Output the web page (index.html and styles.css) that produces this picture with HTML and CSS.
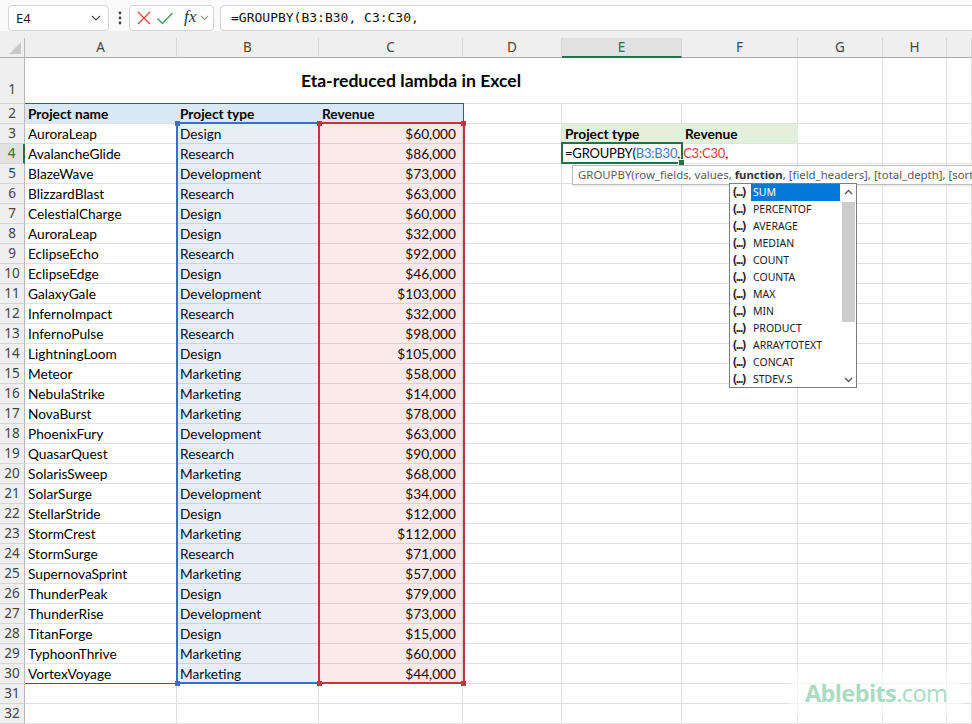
FILE: index.html
```html
<!DOCTYPE html>
<html>
<head>
<meta charset="utf-8">
<link rel="stylesheet" href="styles.css">
</head>
<body>
<div class="toolbar">
  <div class="namebox"><span>E4</span><svg class="chev" width="10" height="6" viewBox="0 0 10 6"><path d="M1 1 L5 5 L9 1" fill="none" stroke="#444" stroke-width="1.2"/></svg></div>
  <svg class="dots" width="4" height="16" viewBox="0 0 4 16"><circle cx="2" cy="3" r="1.4" fill="#444"/><circle cx="2" cy="8" r="1.4" fill="#444"/><circle cx="2" cy="13" r="1.4" fill="#444"/></svg>
  <div class="fxbox">
    <svg width="16" height="16" viewBox="0 0 16 16"><path d="M2 2 L14 14 M14 2 L2 14" stroke="#e0463a" stroke-width="1.4" fill="none"/></svg>
    <svg width="18" height="16" viewBox="0 0 18 16"><path d="M1.5 8.5 L6.5 13.5 L16.5 3" stroke="#3aa05a" stroke-width="1.4" fill="none"/></svg>
    <span class="fx">fx</span>
    <svg width="9" height="6" viewBox="0 0 9 6"><path d="M1 1 L4.5 4.5 L8 1" fill="none" stroke="#999" stroke-width="1.1"/></svg>
  </div>
  <div class="formula">=GROUPBY(B3:B30, C3:C30,</div>
</div>
<div class="sheet">
  <div class="row colhdr"><div class="corner"><span class="tri"></span></div><div>A</div><div>B</div><div>C</div><div>D</div><div class="on">E</div><div>F</div><div>G</div><div>H</div><div></div></div>
  <div class="row r1"><div class="rh">1</div><div class="title">Eta-reduced lambda in Excel</div><i></i><i></i><i></i></div>
  <div class="row"><div class="rh">2</div><div class="c hd">Project name</div><div class="c hd">Project type</div><div class="c hd">Revenue</div><i></i><i></i><i></i><i></i><i></i><i></i></div>
  <div class="row"><div class="rh">3</div><div class="c">AuroraLeap</div><div class="c">Design</div><div class="c num">$60,000</div><i></i><div class="c gh">Project type</div><div class="c gh">Revenue</div><i></i><i></i><i></i></div>
  <div class="row"><div class="rh on">4</div><div class="c">AvalancheGlide</div><div class="c">Research</div><div class="c num">$86,000</div><i></i><div class="c edit">=GROUPBY(<span class="ref-b">B3:B30</span>, <span class="ref-c">C3:C30</span>,</div><i class="nol"></i><i></i><i></i><i></i></div>
  <div class="row"><div class="rh">5</div><div class="c">BlazeWave</div><div class="c">Development</div><div class="c num">$73,000</div><i></i><i></i><i></i><i></i><i></i><i></i></div>
  <div class="row"><div class="rh">6</div><div class="c">BlizzardBlast</div><div class="c">Research</div><div class="c num">$63,000</div><i></i><i></i><i></i><i></i><i></i><i></i></div>
  <div class="row"><div class="rh">7</div><div class="c">CelestialCharge</div><div class="c">Design</div><div class="c num">$60,000</div><i></i><i></i><i></i><i></i><i></i><i></i></div>
  <div class="row"><div class="rh">8</div><div class="c">AuroraLeap</div><div class="c">Design</div><div class="c num">$32,000</div><i></i><i></i><i></i><i></i><i></i><i></i></div>
  <div class="row"><div class="rh">9</div><div class="c">EclipseEcho</div><div class="c">Research</div><div class="c num">$92,000</div><i></i><i></i><i></i><i></i><i></i><i></i></div>
  <div class="row"><div class="rh">10</div><div class="c">EclipseEdge</div><div class="c">Design</div><div class="c num">$46,000</div><i></i><i></i><i></i><i></i><i></i><i></i></div>
  <div class="row"><div class="rh">11</div><div class="c">GalaxyGale</div><div class="c">Development</div><div class="c num">$103,000</div><i></i><i></i><i></i><i></i><i></i><i></i></div>
  <div class="row"><div class="rh">12</div><div class="c">InfernoImpact</div><div class="c">Research</div><div class="c num">$32,000</div><i></i><i></i><i></i><i></i><i></i><i></i></div>
  <div class="row"><div class="rh">13</div><div class="c">InfernoPulse</div><div class="c">Research</div><div class="c num">$98,000</div><i></i><i></i><i></i><i></i><i></i><i></i></div>
  <div class="row"><div class="rh">14</div><div class="c">LightningLoom</div><div class="c">Design</div><div class="c num">$105,000</div><i></i><i></i><i></i><i></i><i></i><i></i></div>
  <div class="row"><div class="rh">15</div><div class="c">Meteor</div><div class="c">Marketing</div><div class="c num">$58,000</div><i></i><i></i><i></i><i></i><i></i><i></i></div>
  <div class="row"><div class="rh">16</div><div class="c">NebulaStrike</div><div class="c">Marketing</div><div class="c num">$14,000</div><i></i><i></i><i></i><i></i><i></i><i></i></div>
  <div class="row"><div class="rh">17</div><div class="c">NovaBurst</div><div class="c">Marketing</div><div class="c num">$78,000</div><i></i><i></i><i></i><i></i><i></i><i></i></div>
  <div class="row"><div class="rh">18</div><div class="c">PhoenixFury</div><div class="c">Development</div><div class="c num">$63,000</div><i></i><i></i><i></i><i></i><i></i><i></i></div>
  <div class="row"><div class="rh">19</div><div class="c">QuasarQuest</div><div class="c">Research</div><div class="c num">$90,000</div><i></i><i></i><i></i><i></i><i></i><i></i></div>
  <div class="row"><div class="rh">20</div><div class="c">SolarisSweep</div><div class="c">Marketing</div><div class="c num">$68,000</div><i></i><i></i><i></i><i></i><i></i><i></i></div>
  <div class="row"><div class="rh">21</div><div class="c">SolarSurge</div><div class="c">Development</div><div class="c num">$34,000</div><i></i><i></i><i></i><i></i><i></i><i></i></div>
  <div class="row"><div class="rh">22</div><div class="c">StellarStride</div><div class="c">Design</div><div class="c num">$12,000</div><i></i><i></i><i></i><i></i><i></i><i></i></div>
  <div class="row"><div class="rh">23</div><div class="c">StormCrest</div><div class="c">Marketing</div><div class="c num">$112,000</div><i></i><i></i><i></i><i></i><i></i><i></i></div>
  <div class="row"><div class="rh">24</div><div class="c">StormSurge</div><div class="c">Research</div><div class="c num">$71,000</div><i></i><i></i><i></i><i></i><i></i><i></i></div>
  <div class="row"><div class="rh">25</div><div class="c">SupernovaSprint</div><div class="c">Marketing</div><div class="c num">$57,000</div><i></i><i></i><i></i><i></i><i></i><i></i></div>
  <div class="row"><div class="rh">26</div><div class="c">ThunderPeak</div><div class="c">Design</div><div class="c num">$79,000</div><i></i><i></i><i></i><i></i><i></i><i></i></div>
  <div class="row"><div class="rh">27</div><div class="c">ThunderRise</div><div class="c">Development</div><div class="c num">$73,000</div><i></i><i></i><i></i><i></i><i></i><i></i></div>
  <div class="row"><div class="rh">28</div><div class="c">TitanForge</div><div class="c">Design</div><div class="c num">$15,000</div><i></i><i></i><i></i><i></i><i></i><i></i></div>
  <div class="row"><div class="rh">29</div><div class="c">TyphoonThrive</div><div class="c">Marketing</div><div class="c num">$60,000</div><i></i><i></i><i></i><i></i><i></i><i></i></div>
  <div class="row"><div class="rh">30</div><div class="c">VortexVoyage</div><div class="c">Marketing</div><div class="c num">$44,000</div><i></i><i></i><i></i><i></i><i></i><i></i></div>
  <div class="row"><div class="rh">31</div><i></i><i></i><i></i><i></i><i></i><i></i><i></i><i></i><i></i></div>
  <div class="row"><div class="rh">32</div><i></i><i></i><i></i><i></i><i></i><i></i><i></i><i></i><i></i></div>

  <div class="tbl"></div>
  <div class="range rb"></div>
  <div class="range rc"></div>
  <span class="hdl hb" style="left:175px;top:83px"></span>
  <span class="hdl hb" style="left:175px;top:643px"></span>
  <span class="hdl hr" style="left:317px;top:83px"></span>
  <span class="hdl hr" style="left:461px;top:83px"></span>
  <span class="hdl hr" style="left:317px;top:643px"></span>
  <span class="hdl hr" style="left:461px;top:643px"></span>
  <div class="active"><span class="fill"></span></div>

  <div class="tip">GROUPBY(row_fields, values, <b>function</b>, [field_headers], [total_depth], [sort_</div>

  <div class="ac">
    <div class="ac-list">
      <div class="it sel"><span class="ic">(...)</span><span class="nm">SUM</span></div>
      <div class="it"><span class="ic">(...)</span><span class="nm">PERCENTOF</span></div>
      <div class="it"><span class="ic">(...)</span><span class="nm">AVERAGE</span></div>
      <div class="it"><span class="ic">(...)</span><span class="nm">MEDIAN</span></div>
      <div class="it"><span class="ic">(...)</span><span class="nm">COUNT</span></div>
      <div class="it"><span class="ic">(...)</span><span class="nm">COUNTA</span></div>
      <div class="it"><span class="ic">(...)</span><span class="nm">MAX</span></div>
      <div class="it"><span class="ic">(...)</span><span class="nm">MIN</span></div>
      <div class="it"><span class="ic">(...)</span><span class="nm">PRODUCT</span></div>
      <div class="it"><span class="ic">(...)</span><span class="nm">ARRAYTOTEXT</span></div>
      <div class="it"><span class="ic">(...)</span><span class="nm">CONCAT</span></div>
      <div class="it"><span class="ic">(...)</span><span class="nm">STDEV.S</span></div>
    </div>
    <div class="ac-scroll">
      <svg width="15" height="14" viewBox="0 0 15 14"><path d="M4 9 L7.5 5.5 L11 9" fill="none" stroke="#555" stroke-width="1.3"/></svg>
      <div class="thumb"></div>
      <div class="track"></div>
      <svg width="15" height="14" viewBox="0 0 15 14"><path d="M4 5 L7.5 8.5 L11 5" fill="none" stroke="#555" stroke-width="1.3"/></svg>
    </div>
  </div>

  <div class="wm"><b>Ablebits</b>.com</div>
</div>
</body>
</html>
```

FILE: styles.css
```css
html, body {
  margin: 0;
  padding: 0;
  width: 972px;
  height: 724px;
  overflow: hidden;
  background: #fff;
}

.toolbar {
  height: 38px;
  box-sizing: border-box;
  padding: 5px 0 0 8px;
  display: flex;
  align-items: flex-start;
  overflow: hidden;
  background: linear-gradient(#fafafa 0, #fafafa 31px, #efefef 31px);
  font-family: "Noto Sans", "Open Sans", sans-serif;
}

.toolbar > * {
  flex-shrink: 0;
}

.namebox {
  width: 101px;
  height: 26px;
  box-sizing: border-box;
  border: 1px solid #d4d4d4;
  border-radius: 4px;
  background: #fff;
  display: flex;
  align-items: center;
  justify-content: space-between;
  padding: 0 7px 0 7px;
  font-size: 13px;
  color: #222;
}

.dots {
  margin: 5px 7px 0 9px;
}

.fxbox {
  width: 85px;
  height: 26px;
  box-sizing: border-box;
  border: 1px solid #d4d4d4;
  border-radius: 4px;
  background: #fff;
  display: flex;
  align-items: center;
  gap: 4px;
  padding-left: 6px;
}

.fx {
  font-family: "Liberation Serif", serif;
  font-style: italic;
  font-size: 17px;
  color: #333;
  margin-left: 6px;
  margin-top: -2px;
}

.formula {
  margin-left: 6px;
  width: 800px;
  height: 26px;
  box-sizing: border-box;
  border: 1px solid #d4d4d4;
  border-radius: 4px;
  background: #fff;
  padding-left: 10px;
  font-family: "DejaVu Sans Mono", monospace;
  font-size: 13px;
  line-height: 24px;
  color: #111;
}

.sheet {
  position: relative;
}

.row {
  display: grid;
  grid-template-columns: 25px 152px 142px 144px 99px 120px 116px 85px 64px 25px;
  height: 20px;
}

.row > * {
  box-sizing: border-box;
  border-right: 1px solid #e1e1e1;
  border-bottom: 1px solid #e1e1e1;
  white-space: nowrap;
  overflow: hidden;
  font-family: Lato, "Liberation Sans", sans-serif;
  font-size: 13.7px;
  line-height: 19px;
  padding: 0 3px;
  color: #000;
  font-style: normal;
}

.row > .rh {
  background: #efefef;
  border-right: 1px solid #b8b8b8;
  border-bottom-color: #d6d6d6;
  text-align: center;
  padding: 0;
  font-family: "Noto Sans", "Open Sans", sans-serif;
  font-size: 13.5px;
  color: #444;
}

.row > .rh.on {
  background: #e1e1e1;
  color: #217346;
  border-right: 2px solid #217346;
}

.colhdr > * {
  background: #efefef;
  border-right-color: #d6d6d6;
  border-bottom: 1px solid #ababab;
  text-align: center;
  font-family: "Noto Sans", "Open Sans", sans-serif;
  font-size: 13.5px;
  color: #444;
  padding: 0;
}

.colhdr > .on {
  background: #e1e1e1;
  color: #217346;
  border-bottom: 2px solid #217346;
}

.colhdr > .corner {
  position: relative;
  border-right-color: #b8b8b8;
}

.tri {
  position: absolute;
  right: 3px;
  bottom: 3px;
  width: 0;
  height: 0;
  border-left: 12px solid transparent;
  border-bottom: 12px solid #c9c9c9;
}

.row.r1 {
  height: 46px;
}

.r1 > .rh {
  line-height: 62px;
}

.r1 > .title {
  grid-column: span 6;
  text-align: center;
  font-weight: bold;
  font-size: 17.6px;
  line-height: 45px;
}

.c.hd {
  background: #dae7f5;
  border-right-color: #dae7f5;
  font-weight: bold;
}

.c.gh {
  background: #e2efda;
  border-right-color: #e2efda;
  font-weight: bold;
}

.c.num {
  text-align: right;
  padding-right: 6px;
}

.row > .edit {
  overflow: visible;
  position: relative;
  z-index: 2;
  border-right-color: transparent;
  font-size: 13px;
  letter-spacing: -0.2px;
}

.ref-b {
  color: #3b78d8;
}

.ref-c {
  color: #d03d3d;
}

.tbl {
  position: absolute;
  left: 25px;
  top: 65px;
  width: 439px;
  height: 581px;
  box-sizing: border-box;
  border: 1px solid #2f5b98;
  border-left: none;
}

.range {
  position: absolute;
  top: 84px;
  height: 562px;
  box-sizing: border-box;
  border: 2px solid;
}

.rb {
  left: 176px;
  width: 144px;
  border-color: #3c6fc4;
  background: rgba(68, 114, 196, 0.12);
}

.rc {
  left: 318px;
  width: 147px;
  border-color: #c4343a;
  background: rgba(205, 55, 55, 0.11);
}

.hdl {
  position: absolute;
  width: 5px;
  height: 5px;
}

.hb {
  background: #3c6fc4;
}

.hr {
  background: #c4343a;
}

.active {
  position: absolute;
  left: 561px;
  top: 104px;
  width: 122px;
  height: 22px;
  box-sizing: border-box;
  border: 2px solid #217346;
  z-index: 3;
}

.fill {
  position: absolute;
  right: -4px;
  bottom: -4px;
  width: 5px;
  height: 5px;
  background: #217346;
  border: 1px solid #fff;
}

.tip {
  position: absolute;
  left: 572px;
  top: 127px;
  width: 400px;
  height: 20px;
  box-sizing: border-box;
  padding: 0 0 0 5px;
  border: 1px solid #bdbdbd;
  border-right: none;
  background: #fff;
  font-family: "Noto Sans", "Open Sans", sans-serif;
  font-size: 11.4px;
  line-height: 17px;
  color: #5a5a5a;
  white-space: nowrap;
  overflow: hidden;
  box-shadow: 1px 1px 2px rgba(0, 0, 0, 0.12);
  z-index: 4;
}

.tip b {
  color: #333;
}

.ac {
  position: absolute;
  left: 729px;
  top: 145px;
  width: 128px;
  height: 205px;
  box-sizing: border-box;
  border: 1px solid #7d7d7d;
  background: #fff;
  display: flex;
  z-index: 5;
}

.ac-list {
  flex: 1;
  padding-left: 3px;
}

.it {
  height: 17px;
  display: flex;
  align-items: center;
  font-family: "Noto Sans", "Open Sans", sans-serif;
  font-size: 10.5px;
  color: #1a1a2a;
}

.ic {
  width: 18px;
  font-weight: bold;
  font-size: 12px;
  letter-spacing: -1.3px;
  color: #222;
  margin-top: -2px;
}

.nm {
  flex: 1;
  height: 17px;
  line-height: 17px;
  padding-left: 2px;
}

.it.sel .nm {
  background: #0078d7;
  color: #fff;
}

.ac-scroll {
  width: 16px;
  display: flex;
  flex-direction: column;
  align-items: center;
  padding-top: 1px;
}

.thumb {
  width: 13px;
  height: 120px;
  margin-top: 3px;
  background: #cdcdcd;
}

.track {
  flex: 1;
}

.wm {
  position: absolute;
  left: 790px;
  top: 632px;
  width: 172px;
  height: 46px;
  background: rgba(255, 255, 255, 0.6);
  text-align: center;
  font-family: "Open Sans", "Noto Sans", sans-serif;
  font-size: 23.5px;
  line-height: 46px;
  color: #a9dcc1;
  letter-spacing: -0.6px;
  z-index: 1;
}

.wm b {
  font-weight: bold;
}
```
